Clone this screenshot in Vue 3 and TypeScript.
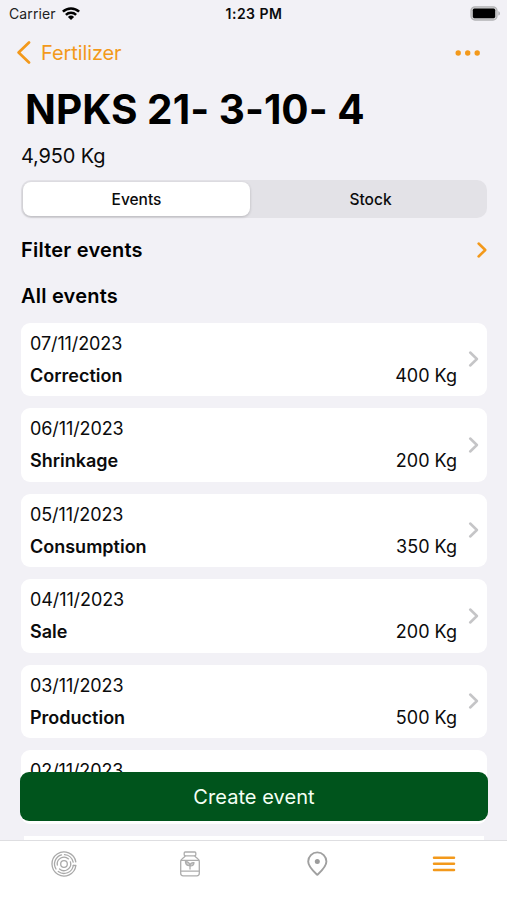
<script setup lang="ts">
import { ref } from 'vue'

interface FarmEvent {
  date: string
  kind: string
  amount: string
}

const tabs = ['Events', 'Stock']
const activeTab = ref('Events')

const events: FarmEvent[] = [
  { date: '07/11/2023', kind: 'Correction', amount: '400 Kg' },
  { date: '06/11/2023', kind: 'Shrinkage', amount: '200 Kg' },
  { date: '05/11/2023', kind: 'Consumption', amount: '350 Kg' },
  { date: '04/11/2023', kind: 'Sale', amount: '200 Kg' },
  { date: '03/11/2023', kind: 'Production', amount: '500 Kg' },
  { date: '02/11/2023', kind: '', amount: '' },
]
</script>

<template>
  <div class="screen">
    <header class="status">
      <div class="carrier">
        <span class="carrier-name">Carrier</span>
        <svg class="wifi" width="18" height="14" viewBox="0 0 18 14" fill="none" stroke="#000" stroke-width="2.5">
          <path d="M0.9 4.700a11.6 11.6 0 0 1 16.2 0" />
          <path d="M3.9 7.900a7.3 7.3 0 0 1 10.2 0" />
          <path d="M9 13.1 5.9 10a4.5 4.5 0 0 1 6.2 0z" fill="#000" stroke="none" />
        </svg>
      </div>
      <span class="clock">1:23 PM</span>
      <svg class="battery" width="31" height="16" viewBox="0 0 31 16">
        <rect x="1" y="0.800" width="26" height="13.2" rx="4" fill="#d0d0d2" stroke="#b3b3b5" stroke-width="1.3" />
        <rect x="2.8" y="2.600" width="22.4" height="9.6" rx="1.600" fill="#000" />
        <path d="M28.400 5.200c2 .7 2 3.700 0 4.400z" fill="#a9a9ac" />
      </svg>
    </header>

    <nav class="navbar">
      <a class="back">
        <svg width="15" height="24" viewBox="0 0 15 24" fill="none" stroke="#f3991b" stroke-width="2.7" stroke-linecap="round" stroke-linejoin="round">
          <path d="M13 1.500 2.600 11.500 13 21.500" />
        </svg>
        <span class="back-label">Fertilizer</span>
      </a>
      <svg class="more" width="26" height="6" viewBox="0 0 26 6" fill="#f3991b">
        <circle cx="3.200" cy="3" r="2.700" />
        <circle cx="12.700" cy="3" r="2.700" />
        <circle cx="22.200" cy="3" r="2.700" />
      </svg>
    </nav>

    <main class="content">
      <h1 class="title">NPKS 21- 3-10- 4</h1>
      <p class="total">4,950 Kg</p>

      <div class="segments">
        <button
          v-for="tab in tabs"
          :key="tab"
          class="segment"
          :class="{ active: tab === activeTab }"
          @click="activeTab = tab"
        >{{ tab }}</button>
      </div>

      <div class="filter">
        <h2 class="heading filter-heading">Filter events</h2>
        <svg width="11" height="16" viewBox="0 0 11 16" fill="none" stroke="#f3991b" stroke-width="2.500" stroke-linecap="round" stroke-linejoin="round">
          <path d="M2.600 1.500 9.300 8l-6.700 6.500" />
        </svg>
      </div>
      <h2 class="heading all-heading">All events</h2>

      <div class="list">
        <article v-for="event in events" :key="event.date" class="card">
          <div class="info">
            <span class="date">{{ event.date }}</span>
            <div class="line">
              <strong class="kind">{{ event.kind }}</strong>
              <span class="amount">{{ event.amount }}</span>
            </div>
          </div>
          <svg class="chevron" width="11" height="16" viewBox="0 0 11 16" fill="none" stroke="#c5c5c7" stroke-width="2.500" stroke-linecap="round" stroke-linejoin="round">
            <path d="M2.200 1.500 8.900 8l-6.700 6.500" />
          </svg>
        </article>
        <div class="next-card"></div>
      </div>
    </main>

    <button class="create"><span class="create-label">Create event</span></button>

    <footer class="tabbar">
      <a class="tab">
        <svg class="rings" width="26" height="26" viewBox="0 0 26 26" fill="none" stroke="#a9a9a9" stroke-width="1.300" stroke-linecap="round">
          <path d="M24.900 14.500A12 12 0 1 1 24.800 10.800M24.900 14.500h-2.600" />
          <path d="M10.500 3.900A9.400 9.400 0 0 0 5 18M7.300 20.500A9.400 9.400 0 0 0 22.300 14.500M22.200 11.200A9.400 9.400 0 0 0 13.500 3.600" />
          <path d="M6.300 14A6.800 6.800 0 0 1 17.500 7.900M19.400 10.800A6.800 6.800 0 0 1 8.500 18" />
          <circle cx="13" cy="13" r="3.300" />
        </svg>
      </a>
      <a class="tab">
        <svg width="22" height="26" viewBox="0 0 22 26" fill="none" stroke="#adadad" stroke-width="1.300" stroke-linejoin="round" stroke-linecap="round">
          <rect x="5.200" y="1" width="11.600" height="3.800" rx="1" />
          <path d="M6.200 4.800C5.500 7.200 1.700 7.300 1.700 10.500V22.300a2.500 2.500 0 0 0 2.500 2.500h13.600a2.500 2.500 0 0 0 2.500-2.500V10.500c0-3.200-3.800-3.300-4.500-5.700" />
          <path d="M2 9.300h18M2 20.200h18" />
          <path d="M11 18v-3.200" />
          <path d="M11 14.600c-2.800.3-4.300-1.300-4.600-4 2.700-.1 4.300 1.300 4.600 4zM11 14.800c.1-2.300 1.600-3.500 4-3.200 0 2.300-1.500 3.600-4 3.200z" fill="#d0d0d0" />
        </svg>
      </a>
      <a class="tab">
        <svg width="22" height="26" viewBox="0 0 22 26" fill="none" stroke="#a0a0a0" stroke-width="1.900" stroke-linejoin="round">
          <path d="M11.300 23.800C7.300 20 2.200 15.800 2.200 10.500a9.100 9.100 0 0 1 18.200 0C20.400 15.800 15.300 20 11.300 23.800z" />
          <circle cx="11.300" cy="10.500" r="2.500" fill="#9c9c9c" stroke="none" />
        </svg>
      </a>
      <a class="tab">
        <svg width="24" height="18" viewBox="0 0 24 18" fill="none" stroke="#f3991b" stroke-width="2.500" stroke-linecap="round">
          <path d="M2 2.700h20M2 8.800h20M2 14.900h20" />
        </svg>
      </a>
    </footer>
  </div>
</template>

<style>
body {
  margin: 0;
  background: #f2f1f6;
}
</style>

<style scoped>
.screen {
  position: relative;
  display: flex;
  flex-direction: column;
  width: 507px;
  height: 900px;
  overflow: hidden;
  background: #f2f1f6;
  color: #0b0b0c;
  font-family: Inter, "Liberation Sans", sans-serif;
}

h1, h2, p {
  margin: 0;
}

svg {
  display: block;
  flex: none;
}

button {
  border: 0;
  padding: 0;
  font-family: inherit;
}

.status {
  display: grid;
  grid-template-columns: 1fr auto 1fr;
  align-items: center;
  height: 28px;
  padding: 0 6px 0 9px;
  box-sizing: border-box;
  font-size: 14px;
  line-height: 28px;
}

.carrier {
  display: flex;
  align-items: center;
  gap: 6px;
  color: #222;
  letter-spacing: 0.1px;
}

.clock {
  margin-right: 2px;
  font-weight: 600;
  letter-spacing: 0.5px;
}

.battery {
  justify-self: end;
}

.navbar {
  display: flex;
  align-items: center;
  justify-content: space-between;
  height: 49px;
  padding: 0 26px 0 16px;
}

.back {
  display: flex;
  align-items: center;
  gap: 10px;
  color: #f3991b;
  font-size: 20px;
  letter-spacing: -0.1px;
}

.content {
  flex: 1;
  min-height: 0;
  padding: 0 20px 0 21px;
  overflow: hidden;
}

.title {
  height: 64px;
  padding-left: 4px;
  color: #000;
  font-size: 40.5px;
  font-weight: 700;
  letter-spacing: 0.03px;
  line-height: 65px;
  white-space: nowrap;
}

.total {
  height: 39px;
  font-size: 20px;
  letter-spacing: -0.15px;
  line-height: 30px;
}

.segments {
  display: flex;
  height: 38px;
  padding: 2px;
  box-sizing: border-box;
  border-radius: 10px;
  background: #e3e2e7;
}

.segment {
  flex: 1;
  padding-left: 6px;
  border-radius: 8px;
  background: transparent;
  color: #0b0b0c;
  font-size: 15.5px;
  font-weight: 500;
}

.segment.active {
  flex: 0 0 227px;
  padding-left: 0;
  background: #fff;
  box-shadow: 0 1px 3px rgba(0, 0, 0, 0.2);
}

.filter {
  display: flex;
  align-items: center;
  justify-content: space-between;
  height: 64px;
}

.heading {
  color: #000;
  font-size: 20px;
  font-weight: 600;
  letter-spacing: 0.22px;
}

.all-heading {
  height: 40.5px;
  line-height: 29px;
}

.list {
  display: flex;
  flex-direction: column;
  gap: 12px;
}

.card {
  display: flex;
  align-items: center;
  flex: none;
  height: 73.5px;
  padding: 0 8px 0 9px;
  box-sizing: border-box;
  border-radius: 9px;
  background: #fff;
}

.info {
  display: flex;
  flex: 1;
  flex-direction: column;
  gap: 8px;
  padding-top: 1px;
  font-size: 18px;
  line-height: 24px;
}

.date {
  letter-spacing: -0.1px;
}

.line {
  display: flex;
  justify-content: space-between;
  height: 24px;
}

.kind {
  font-weight: 600;
}

.chevron {
  margin-left: 11px;
}

.next-card {
  height: 10px;
  margin: 0 3px;
  background: #fff;
}

.create {
  position: absolute;
  left: 20px;
  top: 772px;
  width: 468px;
  height: 49px;
  border-radius: 9px;
  background: #00541c;
  color: #f4fff4;
  font-size: 20px;
}

.create-label {
  letter-spacing: 0.05px;
}

.tabbar {
  display: grid;
  grid-template-columns: repeat(4, 1fr);
  height: 60px;
  padding-top: 10px;
  border-top: 1px solid #dedee1;
  box-sizing: border-box;
  background: #fff;
}

.tab {
  display: flex;
  align-items: center;
  justify-content: center;
  height: 26px;
}

.rings {
  margin-left: 2px;
}
</style>
